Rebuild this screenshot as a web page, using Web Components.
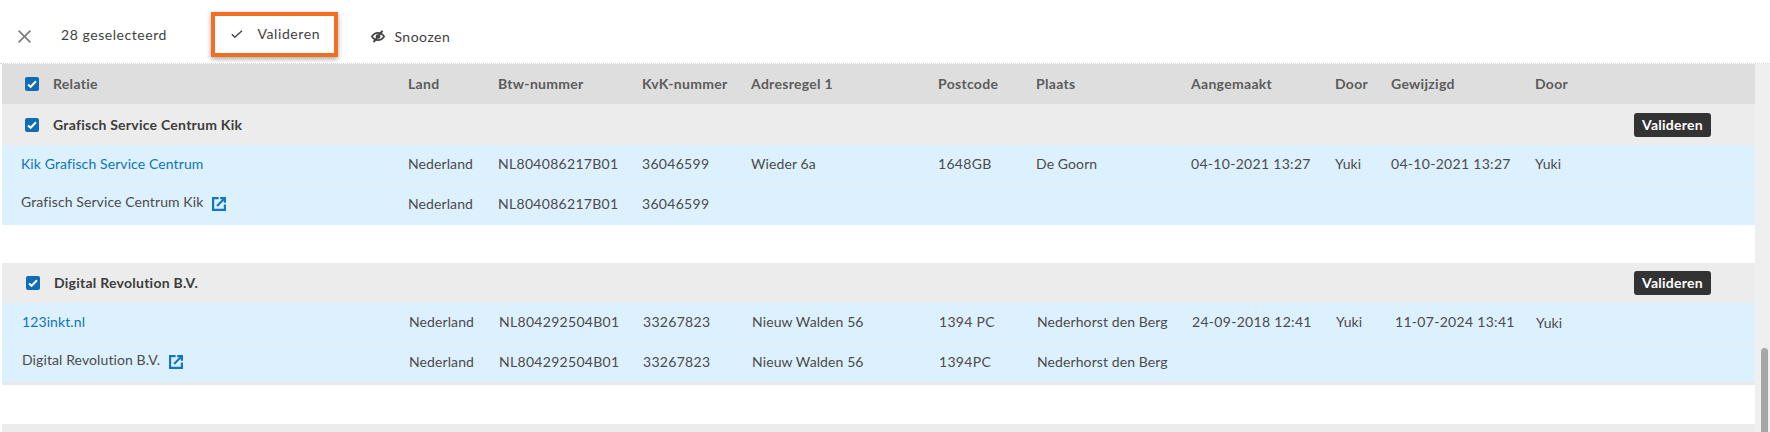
<!DOCTYPE html>
<html lang="nl">
<head>
<meta charset="utf-8">
<title>Relaties valideren</title>
<style>
    html, body { margin: 0; height: 100%; overflow: hidden; background: #fff; }
    body {
        font: 14px/20px Lato, "Noto Sans", sans-serif;
        color: #4b4b4b;
        --cols: 387px 90px 144px 109px 187px 98px 155px 144px 56px 144px 1fr;
    }
</style>
</head>
<body>
<match-page>
    <match-toolbar slot="top">
        <icon-close></icon-close>
        <span class="count">28 geselecteerd</span>
        <tool-button highlight icon="check">Valideren</tool-button>
        <tool-button icon="snooze">Snoozen</tool-button>
    </match-toolbar>

    <head-row>
        <check-box></check-box><span>Relatie</span>
        <b slot="c">Land</b><b slot="c">Btw-nummer</b><b slot="c">KvK-nummer</b><b slot="c">Adresregel 1</b><b slot="c">Postcode</b><b slot="c">Plaats</b><b slot="c">Aangemaakt</b><b slot="c">Door</b><b slot="c">Gewijzigd</b><b slot="c">Door</b>
    </head-row>

    <match-group name="Grafisch Service Centrum Kik">
        <data-row>
            <span><link-text>Kik Grafisch Service Centrum</link-text></span>
            <span>Nederland</span><span class="n">NL804086217B01</span><span class="n">36046599</span><span>Wieder 6a</span><span class="n">1648GB</span><span>De Goorn</span><span class="n">04-10-2021 13:27</span><span>Yuki</span><span class="n">04-10-2021 13:27</span><span>Yuki</span>
        </data-row>
        <data-row>
            <span><name-link>Grafisch Service Centrum Kik</name-link></span>
            <span>Nederland</span><span class="n">NL804086217B01</span><span class="n">36046599</span>
        </data-row>
    </match-group>

    <match-group name="Digital Revolution B.V." shift>
        <data-row>
            <span><link-text>123inkt.nl</link-text></span>
            <span>Nederland</span><span class="n">NL804292504B01</span><span class="n">33267823</span><span>Nieuw Walden 56</span><span class="n">1394 PC</span><span>Nederhorst den Berg</span><span class="n">24-09-2018 12:41</span><span>Yuki</span><span class="n nudge">11-07-2024 13:41</span><span class="low">Yuki</span>
        </data-row>
        <data-row>
            <span><name-link>Digital Revolution B.V.</name-link></span>
            <span>Nederland</span><span class="n">NL804292504B01</span><span class="n">33267823</span><span>Nieuw Walden 56</span><span class="n">1394PC</span><span>Nederhorst den Berg</span>
        </data-row>
    </match-group>

    <match-group empty></match-group>
</match-page>

<script>
function shadowFrom(el, html) {
    const shadow = el.attachShadow({ mode: 'open' });
    const template = document.createElement('template');
    template.innerHTML = html;
    shadow.appendChild(template.content.cloneNode(true));
}

class MatchPage extends HTMLElement {
    constructor() {
        super();
        shadowFrom(this, `
            <style>
                :host { display: flex; flex-direction: column; height: 432px; overflow: hidden; }
                .body { flex: 1; display: flex; min-height: 0; }
                .list { flex: 1; padding-left: 2px; min-width: 0; }
                .track { width: 15px; background: #efefef; position: relative; }
                /* scrollbar thumb sits on top of the track */
                .thumb { position: absolute; left: 6px; top: 284px; width: 7px; height: 90px; background: #a6a6a6; border-radius: 4px; }
            </style>
            <slot name="top"></slot>
            <div class="body">
                <div class="list"><slot></slot></div>
                <div class="track"><div class="thumb"></div></div>
            </div>
        `);
    }
}

class MatchToolbar extends HTMLElement {
    constructor() {
        super();
        shadowFrom(this, `
            <style>
                :host {
                    display: flex; align-items: center; box-sizing: border-box;
                    height: 64px; padding: 6px 0 1px 18px;
                    border-bottom: 1px dotted #d8d8d8;
                }
                ::slotted(.count) { margin: 2px 44.5px 0 30px; color: #3f3f3f; letter-spacing: .55px; white-space: nowrap; }
            </style>
            <slot></slot>
        `);
    }
}

class IconClose extends HTMLElement {
    constructor() {
        super();
        shadowFrom(this, `
            <style>:host { display: block; width: 13px; height: 13px; margin-top: 4px; } svg { display: block; }</style>
            <svg width="13" height="13" viewBox="0 0 13 13" fill="none" stroke="#7a7a7a" stroke-width="1.6"><path d="M.6.6l11.8 11.8M12.4.6L.6 12.4"/></svg>
        `);
    }
}

class ToolButton extends HTMLElement {
    constructor() {
        super();
        const check = `<svg width="12" height="8" viewBox="0 0 12 8" fill="none" stroke="#444" stroke-width="1.4"><path d="M.8 4.2l3 3L11 .7"/></svg>`;
        const snooze = `<svg width="14" height="13" viewBox="0 0 14 13" fill="none" stroke="#444" stroke-width="1.7"><path d="M.9 6.5C2.5 4 4.6 2.8 7 2.8s4.5 1.2 6.100 3.700C11.500 9 9.400 10.200 7 10.200S2.500 9 .9 6.500z"/><circle cx="7" cy="6.500" r="1.500"/><path stroke-width="2" d="M11.400.8L2.600 12.200"/></svg>`;
        const isCheck = this.getAttribute('icon') === 'check';
        shadowFrom(this, `
            <style>
                :host { display: flex; align-items: center; box-sizing: border-box; letter-spacing: .6px; color: #3f3f3f; white-space: nowrap; }
                :host([highlight]) {
                    width: 127px; height: 45px; padding: 0 0 0 16px; margin-right: 33px;
                    border: 4px solid #f26f21; box-shadow: 0 2px 5px rgba(0,0,0,.35);
                }
                svg { display: block; flex: none; }
                .i { width: 26px; display: flex; }
                :host(:not([highlight])) { margin-top: 5px; letter-spacing: .5px; }
                :host(:not([highlight])) .i { width: 23px; }
            </style>
            <span class="i">${isCheck ? check : snooze}</span><slot></slot>
        `);
    }
}

class CheckBox extends HTMLElement {
    constructor() {
        super();
        shadowFrom(this, `
            <style>
                :host { display: block; flex: none; width: 14px; height: 14px; background: #0f6cb6; border-radius: 2px; }
                svg { display: block; }
            </style>
            <svg width="14" height="14" viewBox="0 0 14 14" fill="none" stroke="#fff" stroke-width="2"><path d="M3 7.400l2.600 2.400L11 4.300"/></svg>
        `);
    }
}

class HeadRow extends HTMLElement {
    constructor() {
        super();
        shadowFrom(this, `
            <style>
                :host {
                    display: grid; grid-template-columns: var(--cols); align-items: center;
                    height: 40px; padding-left: 19px; background: #dedede;
                    color: #5c5c5c; font-weight: 700; white-space: nowrap; letter-spacing: .3px;
                }
                .first { display: flex; align-items: center; gap: 14px; padding-left: 4px; }
                ::slotted(b) { font-weight: 700; }
            </style>
            <div class="first"><slot></slot></div>
            <slot name="c"></slot>
        `);
    }
}

class MatchGroup extends HTMLElement {
    constructor() {
        super();
        const empty = this.hasAttribute('empty');
        shadowFrom(this, `
            <style>
                :host { display: block; margin-bottom: 38px; --pad: 19px; --row-top: 40px; --row-last: 40px; --last-line: 0px; }
                :host([shift]) { --pad: 20px; --row-top: 41px; --row-last: 41px; --last-line: 3px; margin-bottom: 39px; }
                .head {
                    display: flex; align-items: center; box-sizing: border-box;
                    height: ${empty ? 8 : 40}px; padding: 0 44px 0 calc(var(--pad) + 4px); background: #ececec;
                    font-weight: 700; color: #3d3d3d; white-space: nowrap; gap: 14px; letter-spacing: .25px;
                }
                :host(:not([shift])) .head { height: ${empty ? 8 : 41}px; }
                .name { flex: 1; }
                .go {
                    width: 77px; height: 24px; line-height: 24px; text-align: center;
                    background: #333; color: #fff; border-radius: 3px;
                }
            </style>
            ${empty ? '<div class="head"></div>' : `
            <div class="head">
                <check-box></check-box>
                <span class="name">${this.getAttribute('name')}</span>
                <span class="go">Valideren</span>
            </div>
            <slot></slot>`}
        `);
    }
}

class DataRow extends HTMLElement {
    constructor() {
        super();
        shadowFrom(this, `
            <style>
                :host {
                    display: grid; grid-template-columns: var(--cols); align-items: center; box-sizing: border-box;
                    height: var(--row-top); padding: 0 0 2px var(--pad); background: #ddf0fe;
                    white-space: nowrap; color: #4b4b4b; letter-spacing: .1px;
                    border-bottom: 1px solid #e6eff5;
                }
                :host(:last-child) { height: var(--row-last); border-bottom: var(--last-line) solid #e6eaed; }
                ::slotted(.n) { letter-spacing: .3px; }
                ::slotted(.nudge) { margin-left: 3px; }
                ::slotted(.low) { position: relative; top: 1px; }
            </style>
            <slot></slot>
        `);
    }
}

class LinkText extends HTMLElement {
    constructor() {
        super();
        shadowFrom(this, `<style>:host { color: #0f74b8; }</style><slot></slot>`);
    }
}

class NameLink extends HTMLElement {
    constructor() {
        super();
        shadowFrom(this, `
            <style>
                :host { display: inline-flex; align-items: center; gap: 9px; position: relative; top: -2px; }
                svg { display: block; flex: none; position: relative; top: 2px; }
            </style>
            <slot></slot>
            <svg width="14" height="14" viewBox="3 3 18 18" fill="none" stroke="#0f78c0" stroke-width="2.800"><path d="M11.500 4.400H4.400v15.200h15.200v-7.100"/><path d="M9.500 14.500L19 5"/><path d="M13.500 4.400h6.100v6.100"/></svg>
        `);
    }
}

customElements.define('match-page', MatchPage);
customElements.define('match-toolbar', MatchToolbar);
customElements.define('icon-close', IconClose);
customElements.define('tool-button', ToolButton);
customElements.define('check-box', CheckBox);
customElements.define('head-row', HeadRow);
customElements.define('match-group', MatchGroup);
customElements.define('data-row', DataRow);
customElements.define('link-text', LinkText);
customElements.define('name-link', NameLink);
</script>
</body>
</html>
